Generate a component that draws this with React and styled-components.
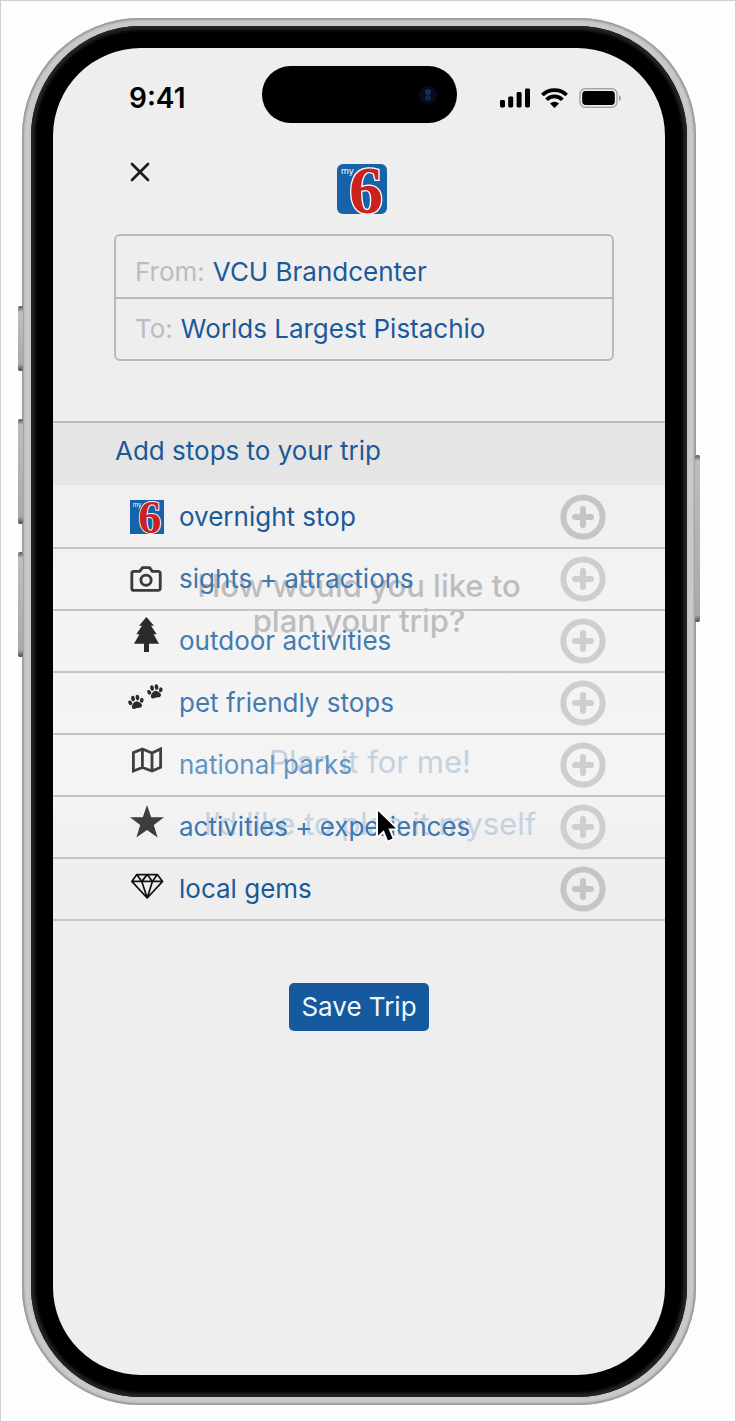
import React from 'react'
import styled, { createGlobalStyle } from 'styled-components'
import { X } from 'lucide-react'

const GlobalStyle = createGlobalStyle`
  * {
    box-sizing: border-box;
  }
  body {
    margin: 0;
    background: #fdfdfd;
    font-family: Inter, 'Liberation Sans', sans-serif;
  }
  button, input {
    font: inherit;
  }
`;

const Canvas = styled.div`
  display: flex;
  min-height: 100vh;
  padding: 17px 39px 16px 21px;
  border: 1px solid #cfcfcf;
`;

const Phone = styled.div`
  position: relative;
  display: flex;
  flex: 1;
  min-width: 0;
  padding: 8px 9px;
  border-radius: 118px;
  background: #c6c6c6;
  box-shadow: inset 0 0 2px 2px #999, inset 0 0 0 7px #c9c9c9;
`;

const SideKey = styled.span`
  position: absolute;
  top: ${props => props.$top}px;
  ${props => props.$side}: -4px;
  width: 5px;
  height: ${props => props.$length}px;
  border-radius: 2px;
  background: linear-gradient(#555, #bdbdbd 6px, #a9a9a9 calc(100% - 7px), #4a4a4a);
`;

const Bezel = styled.div`
  display: flex;
  flex: 1;
  min-width: 0;
  padding: 22px;
  border-radius: 110px;
  background: #000;
  box-shadow: inset 0 0 3px 4px #242424;
`;

const Screen = styled.main`
  display: flex;
  flex: 1;
  flex-direction: column;
  min-width: 0;
  padding-top: 18px;
  border-radius: 88px;
  background: #eeeeee;
`;

const StatusBar = styled.div`
  display: grid;
  grid-template-columns: 1fr 195px 1fr;
  align-items: center;
  justify-items: center;
`;

const Time = styled.time`
  padding-top: 6px;
  color: #000;
  font-size: 28px;
  font-weight: 600;
  line-height: 32px;
`;

const Island = styled.div`
  display: flex;
  align-items: center;
  justify-content: flex-end;
  width: 195px;
  height: 57px;
  padding-right: 19px;
  border-radius: 29px;
  background: #000;
`;

const StatusIcons = styled.div`
  display: flex;
  align-items: center;
  gap: 11px;
  padding-top: 6px;
`;

const Header = styled.header`
  display: grid;
  grid-template-columns: 1fr auto 1fr;
  align-items: start;
  padding: 33px 65px 20px 71px;
`;

const CloseButton = styled.button`
  display: flex;
  width: 32px;
  height: 32px;
  padding: 0;
  border: 0;
  background: none;
  color: #1c1c1c;
`;

const HeaderLogo = styled.div`
  display: flex;
  padding-top: 8px;
`;

const TripForm = styled.form`
  margin: 0 51px 60px 61px;
  padding-top: 10px;
  border: 2px solid #b9b9b9;
  border-radius: 6px;
`;

const Field = styled.div`
  display: flex;
  align-items: center;
  gap: 8px;
  height: ${props => props.$height}px;
  padding: 0 19px;
  border-bottom: ${props => props.$last ? '0' : '2px solid #b9b9b9'};
  font-size: 26px;
  line-height: 32px;

  label {
    color: #bcbcbc;
  }
  input {
    flex: 1;
    min-width: 0;
    padding: 0;
    border: 0;
    outline: 0;
    background: none;
    color: #1b5998;
  }
`;

const StopsTitle = styled.h2`
  margin: 0;
  padding: 12px 61px 18px 62px;
  border-top: 2px solid #bcbcbc;
  background: #e5e5e5;
  color: #1b5998;
  font-size: 26px;
  font-weight: 400;
  line-height: 32px;
`;

const Stops = styled.section`
  position: relative;
  padding-top: 2px;
  background: linear-gradient(#efefef, #f3f3f3 100px, #f4f4f4 300px, #eeeeee 390px);
`;

const StopList = styled.ul`
  position: relative;
  margin: 0;
  padding: 0;
  list-style: none;
`;

const StopRow = styled.li`
  display: flex;
  align-items: center;
  gap: 15px;
  height: 62px;
  padding: 0 59px 0 77px;
  border-bottom: 2px solid #c4c4c4;
`;

const StopName = styled.span`
  flex: 1;
  color: ${props => props.$color};
  font-size: 26px;
  line-height: 32px;
`;

const AddButton = styled.button`
  display: flex;
  padding: 0;
  border: 0;
  background: none;
  color: ${props => props.$pale ? '#cecece' : '#c5c5c5'};
`;

const Prompt = styled.div`
  position: absolute;
  inset: 83px 0 auto;
  display: flex;
  flex-direction: column;
  align-items: center;
`;

const Question = styled.p`
  max-width: 350px;
  margin: 0 0 92px;
  color: #bdbdbd;
  font-size: 31px;
  font-weight: 500;
  line-height: 35px;
  text-align: center;
`;

const Choice = styled.button`
  height: 62px;
  margin-left: 22px;
  padding: 0;
  border: 0;
  background: none;
  color: #c3d2e1;
  font-size: 31px;
  line-height: 35px;
`;

const Pointer = styled.svg`
  position: absolute;
  top: 322px;
  left: 321px;
`;

const SaveButton = styled.button`
  align-self: center;
  height: 48px;
  margin-top: 62px;
  padding: 0 12px;
  border: 0;
  border-radius: 5px;
  background: #155a9f;
  color: #f3f6fa;
  font-size: 26px;
  line-height: 32px;
`;

const Logo = ({ size, radius }) => (
  <svg width={size} height={size} viewBox="0 0 50 50" aria-label="my6">
    <rect width="50" height="50" rx={radius} fill="#1763a9" />
    <text x="12" y="49" fill="#c9221f" stroke="#fff" strokeWidth="2.6" paintOrder="stroke"
      fontFamily="Liberation Serif, serif" fontWeight="700" fontSize="68">6</text>
    <text x="4" y="10" fill="#fff" fontFamily="Inter, sans-serif" fontSize="9">my</text>
  </svg>
)

const Drawing = ({ children }) => (
  <svg width="34" height="48" viewBox="0 0 34 48" overflow="visible" aria-hidden="true">{children}</svg>
)

const Paw = ({ x, y, turn }) => (
  <g transform={`translate(${x} ${y}) rotate(${turn})`} fill="#2b2b2b">
    <ellipse cx="-5.8" cy="-0.4" rx="1.8" ry="2.5" transform="rotate(-25 -5.8 -0.4)" />
    <ellipse cx="-2.2" cy="-4" rx="1.9" ry="2.8" />
    <ellipse cx="2.4" cy="-4" rx="1.9" ry="2.8" />
    <ellipse cx="6" cy="-0.4" rx="1.8" ry="2.5" transform="rotate(25 6 -0.4)" />
    <path d="M0 -0.6C2 -0.6 3.4 1.2 4.6 2.6C6 4.6 4.6 7 2.4 6.5C0.8 6.1 -0.8 6.1 -2.4 6.5C-4.6 7 -6 4.6 -4.6 2.6C-3.4 1.2 -2 -0.6 0 -0.6Z" />
  </g>
)

const Camera = () => (
  <Drawing>
    <g fill="none" stroke="#3b3b3b" strokeWidth="2" strokeLinejoin="round" transform="translate(-1 7) scale(1.42)">
      <path d="M14.5 4h-5L7.6 6.6H3.4A1.4 1.4 0 0 0 2 8v10.6A1.4 1.4 0 0 0 3.4 20h17.2a1.4 1.4 0 0 0 1.4-1.4V8a1.4 1.4 0 0 0-1.4-1.4h-4.2z" />
      <circle cx="12" cy="12.8" r="3.6" />
    </g>
  </Drawing>
)

const Tree = () => (
  <Drawing>
    <path fill="#2b2b2b" d="M16.4 0L24 8.7H21L26.7 17.3H23.6L29 26.7H19V35H14V26.7H4L9.4 17.3H6.3L12 8.7H9Z" />
  </Drawing>
)

const Paws = () => (
  <Drawing>
    <Paw x={6} y={23} turn={-12} />
    <Paw x={25} y={12.5} turn={-12} />
  </Drawing>
)

const FoldedMap = () => (
  <Drawing>
    <path fill="none" stroke="#3f3f3f" strokeWidth="2.8" d="M3.4 11.6L12.4 8L22 12L30.6 8V26.4L22 30L12.4 26.4L3.4 30ZM12.4 8V26.4M22 12V30" />
  </Drawing>
)

const Star = () => (
  <Drawing>
    <path fill="#3d3d3d" d="M17 2L21.2 14.3H34L23.8 22L27.6 34.5L17 27L6.4 34.5L10.2 22L0 14.3H12.8Z" />
  </Drawing>
)

const Gem = () => (
  <Drawing>
    <path fill="none" stroke="#111" strokeWidth="1.7" strokeLinejoin="round"
      d="M6.8 9.6H27.3L32.6 16.4L17.2 33L1.8 16.4ZM1.8 16.4H32.6M6.8 9.6L11.8 16.4L17.2 9.6L22.4 16.4L27.3 9.6M11.8 16.4L17.2 33L22.4 16.4" />
  </Drawing>
)

const stops = [
  { name: 'overnight stop', icon: <Logo size={34} radius={0} />, color: '#1b5998' },
  { name: 'sights + attractions', icon: <Camera />, color: '#3d77ad', pale: true },
  { name: 'outdoor activities', icon: <Tree />, color: '#427bb1', pale: true },
  { name: 'pet friendly stops', icon: <Paws />, color: '#427bb1', pale: true },
  { name: 'national parks', icon: <FoldedMap />, color: '#6394c2', pale: true },
  { name: 'activities + experiences', icon: <Star />, color: '#3d78b0', pale: true },
  { name: 'local gems', icon: <Gem />, color: '#1b5998' },
]

const Stop = ({ stop }) => (
  <StopRow>
    {stop.icon}
    <StopName $color={stop.color}>{stop.name}</StopName>
    <AddButton type="button" $pale={stop.pale} aria-label={'Add ' + stop.name}>
      <svg width="46" height="46" viewBox="0 0 46 46" fill="none" stroke="currentColor" strokeWidth="6">
        <circle cx="23" cy="23" r="19.6" />
        <path d="M15 23H31M23 15V31" strokeLinecap="round" />
      </svg>
    </AddButton>
  </StopRow>
)

class App extends React.Component {
  render() {
    return (
      <Canvas>
        <GlobalStyle />
        <Phone>
          <SideKey $side="left" $top={288} $length={65} />
          <SideKey $side="left" $top={401} $length={105} />
          <SideKey $side="left" $top={534} $length={105} />
          <SideKey $side="right" $top={437} $length={167} />
          <Bezel>
            <Screen>
              <StatusBar>
                <Time>9:41</Time>
                <Island>
                  <svg width="20" height="20" viewBox="0 0 20 20">
                    <circle cx="10" cy="10" r="9" fill="#070b1c" />
                    <circle cx="10" cy="7" r="3" fill="#12305c" />
                    <circle cx="10" cy="13" r="3" fill="#0f2850" />
                  </svg>
                </Island>
                <StatusIcons>
                  <svg width="30" height="20" viewBox="0 0 30 20">
                    <rect x="0" y="12" width="5" height="7.5" rx="1.4" />
                    <rect x="8.2" y="8.5" width="5" height="11" rx="1.4" />
                    <rect x="16.6" y="4" width="5" height="15.5" rx="1.4" />
                    <rect x="25" y="0.5" width="5" height="19" rx="1.4" />
                  </svg>
                  <svg width="27" height="20" viewBox="0 0 27 20" fill="none" stroke="#000" strokeWidth="3.8">
                    <path d="M1.4 7A17.4 17.4 0 0 1 25.6 7" />
                    <path d="M5.6 11.8A11 11 0 0 1 21.4 11.8" />
                    <path d="M13.5 20L9 15.6A6.4 6.4 0 0 1 18 15.6Z" fill="#000" stroke="none" />
                  </svg>
                  <svg width="43" height="20" viewBox="0 0 43 20">
                    <rect x="1" y="0.8" width="37" height="18.4" rx="5" fill="none" stroke="#a3a3a3" strokeWidth="1.4" />
                    <rect x="3.2" y="3" width="32.6" height="14" rx="3.4" />
                    <path d="M40 7Q42 8 42 10T40 13Z" fill="#999" />
                  </svg>
                </StatusIcons>
              </StatusBar>
              <Header>
                <CloseButton type="button" aria-label="Close">
                  <X size={32} strokeWidth={2} />
                </CloseButton>
                <HeaderLogo>
                  <Logo size={50} radius={6} />
                </HeaderLogo>
              </Header>
              <TripForm>
                <Field $height={53}>
                  <label htmlFor="from">From:</label>
                  <input id="from" type="text" defaultValue="VCU Brandcenter" />
                </Field>
                <Field $height={60} $last>
                  <label htmlFor="to">To:</label>
                  <input id="to" type="text" defaultValue="Worlds Largest Pistachio" />
                </Field>
              </TripForm>
              <StopsTitle>Add stops to your trip</StopsTitle>
              <Stops>
                <Prompt>
                  <Question>How would you like to plan your trip?</Question>
                  <Choice type="button">Plan it for me!</Choice>
                  <Choice type="button">I’d like to plan it myself</Choice>
                </Prompt>
                <StopList>
                  {stops.map(stop => <Stop key={stop.name} stop={stop} />)}
                </StopList>
                <Pointer width="27" height="37" viewBox="-4 -4 27 37">
                  <path d="M0 0V24.5L5.8 19.2L10 29.5L14.6 27.6L10.4 17.6H18Z" stroke="#fff" strokeWidth="4" strokeLinejoin="round" paintOrder="stroke" />
                </Pointer>
              </Stops>
              <SaveButton type="button">Save Trip</SaveButton>
            </Screen>
          </Bezel>
        </Phone>
      </Canvas>
    )
  }
}

export default App
